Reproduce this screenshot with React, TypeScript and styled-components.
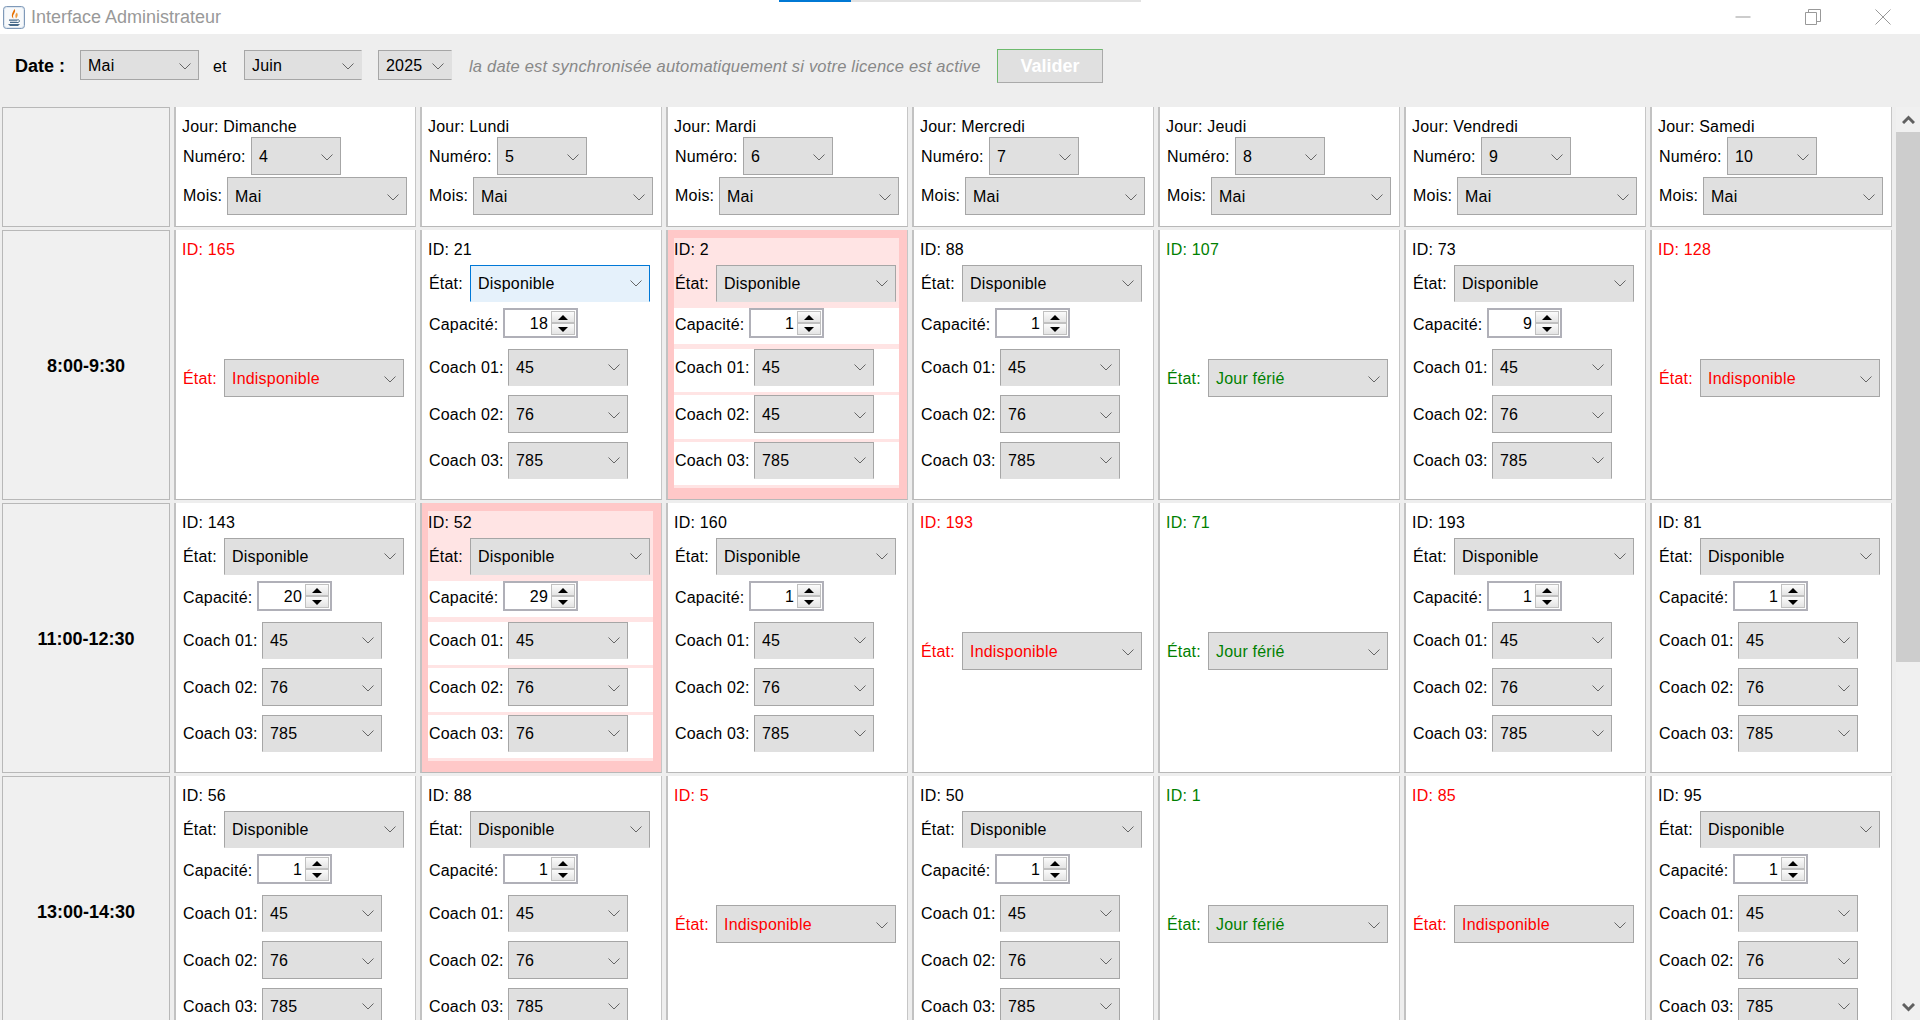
import * as React from 'react';
import styled, { createGlobalStyle } from 'styled-components';

const GlobalStyle = createGlobalStyle`
  html, body {
    margin: 0;
    padding: 0;
    height: 1020px;
    overflow: hidden;
    background: #eeeeee;
    font-family: 'Liberation Sans', Arial, sans-serif;
    font-size: 16px;
    letter-spacing: 0.2px;
    color: #000;
  }
`;

const Window = styled.div`
  display: flex;
  flex-direction: column;
  width: 1920px;
  height: 1020px;
  overflow: hidden;
`;

const TitleBar = styled.div`
  position: relative;
  display: flex;
  align-items: center;
  flex: none;
  height: 34px;
  padding-left: 3px;
  background: #fff;
  color: #999;
  font-size: 18px;
  letter-spacing: 0;
`;

const TitleText = styled.span`
  margin-left: 6px;
`;

const LoadTrack = styled.div`
  position: absolute;
  top: 0;
  left: 779px;
  width: 362px;
  height: 2px;
  background: #e2e2e2;
`;

const LoadBar = styled.div`
  width: 72px;
  height: 100%;
  background: #0078d4;
`;

const WindowButtons = styled.div`
  display: flex;
  align-items: center;
  gap: 54px;
  margin-left: auto;
  padding-right: 29px;
`;

const Toolbar = styled.div`
  display: flex;
  align-items: center;
  flex: none;
  height: 73px;
  padding: 0 0 11px 15px;
  box-sizing: border-box;
  background: #eeeeee;
`;

const DateLabel = styled.span`
  width: 65px;
  padding-top: 2px;
  font-weight: 700;
  font-size: 18px;
  letter-spacing: 0;
`;

const AndLabel = styled.span`
  width: 45px;
  padding: 3px 0 0 14px;
  box-sizing: border-box;
`;

const YearSlot = styled.div`
  margin-left: 16px;
`;

const Hint = styled.span`
  margin: 0 19px 0 17px;
  padding-top: 2px;
  width: 509px;
  flex: none;
  color: #888;
  font-size: 16.5px;
  font-style: italic;
  white-space: nowrap;
`;

const ValidateButton = styled.button`
  width: 106px;
  height: 34px;
  margin-top: 2px;
  padding: 0;
  border: 1px solid #aaaaaa;
  border-top-color: #6dba6d;
  border-left-color: #6dba6d;
  background: #e0e0e0;
  color: #fff;
  font: 700 18px 'Liberation Sans', Arial, sans-serif;
`;

const Body = styled.div`
  display: flex;
  flex: 1;
  min-height: 0;
`;

const Board = styled.div`
  display: grid;
  flex: none;
  grid-template-columns: 168px repeat(7, 242px);
  grid-template-rows: 120px repeat(3, 270px);
  column-gap: 4px;
  row-gap: 3px;
  width: 1893px;
  padding-left: 2px;
  box-sizing: border-box;
  overflow: hidden;
`;

const TimeCell = styled.div`
  display: flex;
  align-items: center;
  justify-content: center;
  padding-top: 2px;
  border: 1px solid #b8b8b8;
  background: #f0f0f0;
  font-weight: 700;
  font-size: 18px;
  letter-spacing: 0;
  box-sizing: border-box;
`;

const Cell = styled.div<{ $flag?: boolean }>`
  min-width: 0;
  padding: 8px 8px 0 6px;
  box-sizing: border-box;
  border-left: 2px solid #c2c2c2;
  border-right: 1px solid #c6c6c6;
  border-bottom: 1px solid #b8b8b8;
  background: ${props => (props.$flag ? '#ffc8c8' : '#fff')};
`;

const Stack = styled.div<{ $flag?: boolean }>`
  display: flex;
  flex-direction: column;
  gap: 3px;
  height: 250px;
  background: ${props => (props.$flag ? '#ffe4e4' : 'transparent')};
`;

const Top = styled.div`
  height: 70px;
`;

const Band = styled.div<{ $flag?: boolean; $h: number }>`
  display: flex;
  align-items: flex-start;
  height: ${props => props.$h}px;
  padding-left: 1px;
  background: ${props => (props.$flag ? '#fff' : 'transparent')};
`;

const CapacityBand = styled(Band)`
  margin-bottom: 2px;
`;

const FieldRow = styled.div<{ $top?: number }>`
  display: flex;
  align-items: center;
  padding-left: 1px;
  margin-top: ${props => props.$top || 0}px;
`;

const TextLine = styled.div<{ $color?: string }>`
  height: 22px;
  line-height: 24px;
  color: ${props => props.$color || '#000'};
  white-space: nowrap;
`;

const Label = styled.span<{ $w: number; $color?: string; $h?: number }>`
  flex: none;
  width: ${props => props.$w}px;
  color: ${props => props.$color || '#000'};
  white-space: nowrap;
  line-height: ${props => props.$h || 37}px;
`;

const ComboBox = styled.div<{
  $w: number;
  $h?: number;
  $color?: string;
  $focus?: boolean;
  $noBottom?: boolean;
  $noRight?: boolean;
}>`
  display: flex;
  align-items: center;
  flex: none;
  justify-content: space-between;
  width: ${props => props.$w}px;
  height: ${props => props.$h || 37}px;
  padding: ${props => (props.$h ? '2px' : '0')} 7px 0 7px;
  box-sizing: border-box;
  border: 1px solid ${props => (props.$focus ? '#0078d7' : '#a6a6a6')};
  border-bottom-color: ${props => (props.$noBottom ? 'transparent' : props.$focus ? '#0078d7' : '#a6a6a6')};
  border-right-color: ${props => (props.$noRight ? 'transparent' : props.$focus ? '#0078d7' : '#a6a6a6')};
  background: ${props => (props.$focus ? '#e5f1fb' : '#e0e0e0')};
  color: ${props => props.$color || '#000'};
  white-space: nowrap;
`;

const Spinner = styled.div`
  display: flex;
  flex: none;
  width: 75px;
  height: 30px;
  padding: 1px;
  box-sizing: border-box;
  border: 2px solid #b0b0b8;
  background: #fff;
`;

const SpinnerValue = styled.span`
  flex: 1;
  padding-right: 3px;
  text-align: right;
  line-height: 25px;
`;

const SpinnerButtons = styled.div`
  display: flex;
  flex-direction: column;
  flex: none;
  width: 24px;
`;

const SpinnerButton = styled.div`
  display: flex;
  align-items: center;
  justify-content: center;
  flex: 1;
  border: 1px solid #c0c0c0;
  background: linear-gradient(#fbfbfb, #e4e4e4);
`;

const ScrollBar = styled.div`
  display: flex;
  flex-direction: column;
  flex: none;
  width: 24px;
  margin-left: 3px;
  background: #f0f0f0;
`;

const ScrollArrow = styled.div`
  display: flex;
  align-items: center;
  justify-content: center;
  flex: none;
  height: 25px;
`;

const ScrollThumb = styled.div`
  flex: none;
  height: 530px;
  background: #cdcdcd;
`;

const ScrollRest = styled.div`
  flex: 1;
`;

const Chevron = () => (
  <svg width="12" height="7" viewBox="0 0 12 7" fill="none">
    <path d="M0.5 0.5 L6 6 L11.5 0.5" stroke="#666" strokeWidth="1" />
  </svg>
);

const ScrollChevron = ({ up }: { up?: boolean }) => (
  <svg width="13" height="9" viewBox="0 0 13 9" fill="none">
    <path d={up ? 'M1 8 L6.5 2.5 L12 8' : 'M1 1 L6.5 6.5 L12 1'} stroke="#606060" strokeWidth="3" />
  </svg>
);

const Triangle = ({ up }: { up?: boolean }) => (
  <svg width="10" height="5" viewBox="0 0 10 5">
    <path d={up ? 'M0 5 L5 0 L10 5 Z' : 'M0 0 L10 0 L5 5 Z'} fill="#000" />
  </svg>
);

const JavaIcon = () => (
  <svg width="22" height="23" viewBox="0 0 22 23" fill="none">
    <rect x="0.5" y="0.5" width="21" height="22" rx="3" fill="#dfe7f0" stroke="#7f99b8" />
    <rect x="2" y="2" width="18" height="19" rx="2" fill="#f7f9fb" />
    <path d="M11.5 3 C14 6.5 8.5 8 10.5 12.5 C7.5 10.5 9 7 11.5 3 Z" fill="#e76f00" />
    <path d="M14 6.5 C12 8 12 10.5 13 12.5 C15 10.5 15 8.5 14 6.5 Z" fill="#ef9a3c" />
    <path d="M6 13.5 H14.5 V14.7 H6 Z M7 15.8 H14 V17 H7 Z M5 18 H17 L15 20 H7 Z" fill="#46698a" />
    <path d="M14.5 13.7 C17.5 13.7 17 16.6 14 16.6" stroke="#46698a" strokeWidth="1" />
  </svg>
);

const Minimize = () => (
  <svg width="16" height="16" viewBox="0 0 16 16" fill="none">
    <path d="M0.5 8 H15.5" stroke="#999" />
  </svg>
);

const Restore = () => (
  <svg width="16" height="16" viewBox="0 0 16 16" fill="none">
    <path d="M0.5 3.5 H11.5 V15.5 H0.5 Z M3.5 3.5 V0.5 H15.5 V12.5 H11.5" stroke="#999" />
  </svg>
);

const Close = () => (
  <svg width="16" height="16" viewBox="0 0 16 16" fill="none">
    <path d="M0.5 0.5 L15.5 15.5 M15.5 0.5 L0.5 15.5" stroke="#999" />
  </svg>
);

const RED = '#ff0000';
const GREEN = '#008000';

interface Slot {
  id: number;
  off?: 'Indisponible' | 'Jour férié';
  cap?: number;
  coach?: string[];
  flag?: boolean;
  focus?: boolean;
}

const open = (id: number, cap = 1, coach = ['45', '76', '785']): Slot => ({ id, cap, coach });

const ROWS: { time: string; slots: Slot[] }[] = [
  {
    time: '8:00-9:30',
    slots: [
      { id: 165, off: 'Indisponible' },
      { ...open(21, 18), focus: true },
      { ...open(2, 1, ['45', '45', '785']), flag: true },
      open(88),
      { id: 107, off: 'Jour férié' },
      open(73, 9),
      { id: 128, off: 'Indisponible' },
    ],
  },
  {
    time: '11:00-12:30',
    slots: [
      open(143, 20),
      { ...open(52, 29, ['45', '76', '76']), flag: true },
      open(160),
      { id: 193, off: 'Indisponible' },
      { id: 71, off: 'Jour férié' },
      open(193),
      open(81),
    ],
  },
  {
    time: '13:00-14:30',
    slots: [
      open(56),
      open(88),
      { id: 5, off: 'Indisponible' },
      open(50),
      { id: 1, off: 'Jour férié' },
      { id: 85, off: 'Indisponible' },
      open(95),
    ],
  },
];

const DAYS = [
  ['Dimanche', '4'],
  ['Lundi', '5'],
  ['Mardi', '6'],
  ['Mercredi', '7'],
  ['Jeudi', '8'],
  ['Vendredi', '9'],
  ['Samedi', '10'],
];

const Combo = (props: {
  value: string;
  w: number;
  h?: number;
  color?: string;
  focus?: boolean;
  noBottom?: boolean;
  noRight?: boolean;
}) => (
  <ComboBox
    $w={props.w}
    $h={props.h}
    $color={props.color}
    $focus={props.focus}
    $noBottom={props.noBottom}
    $noRight={props.noRight}
  >
    <span>{props.value}</span>
    <Chevron />
  </ComboBox>
);

const SlotCell = ({ slot }: { slot: Slot }) => {
  if (slot.off) {
    const color = slot.off === 'Jour férié' ? GREEN : RED;
    return (
      <Cell>
        <TextLine $color={color}>ID: {slot.id}</TextLine>
        <FieldRow $top={99}>
          <Label $w={41} $color={color}>État:</Label>
          <Combo value={slot.off} w={180} h={38} color={color} />
        </FieldRow>
      </Cell>
    );
  }
  const coach = slot.coach || [];
  return (
    <Cell $flag={slot.flag}>
      <Stack $flag={slot.flag}>
        <div>
          <Top>
            <TextLine>ID: {slot.id}</TextLine>
            <FieldRow $top={5}>
              <Label $w={41}>État:</Label>
              <Combo value="Disponible" w={180} focus={slot.focus} noBottom />
            </FieldRow>
          </Top>
          <CapacityBand $flag={slot.flag} $h={36}>
            <Label $w={74} $h={33}>Capacité:</Label>
            <Spinner>
              <SpinnerValue>{slot.cap}</SpinnerValue>
              <SpinnerButtons>
                <SpinnerButton><Triangle up /></SpinnerButton>
                <SpinnerButton><Triangle /></SpinnerButton>
              </SpinnerButtons>
            </Spinner>
          </CapacityBand>
        </div>
        {coach.map((value, i) => (
          <Band key={i} $flag={slot.flag} $h={i === 1 ? 44 : 43}>
            <Label $w={79} $h={i === 1 ? 39 : 37}>Coach 0{i + 1}:</Label>
            {i === 1 ? (
              <Combo value={value} w={120} h={38} />
            ) : (
              <Combo value={value} w={120} noBottom />
            )}
          </Band>
        ))}
      </Stack>
    </Cell>
  );
};

export default function App() {
  return (
    <Window>
      <GlobalStyle />
      <TitleBar>
        <JavaIcon />
        <TitleText>Interface Administrateur</TitleText>
        <LoadTrack><LoadBar /></LoadTrack>
        <WindowButtons>
          <Minimize />
          <Restore />
          <Close />
        </WindowButtons>
      </TitleBar>
      <Toolbar>
        <DateLabel>Date :</DateLabel>
        <Combo value="Mai" w={119} h={30} />
        <AndLabel>et</AndLabel>
        <Combo value="Juin" w={118} h={30} noRight />
        <YearSlot>
          <Combo value="2025" w={74} h={30} noRight />
        </YearSlot>
        <Hint>la date est synchronisée automatiquement si votre licence est active</Hint>
        <ValidateButton>Valider</ValidateButton>
      </Toolbar>
      <Body>
        <Board>
          <TimeCell />
          {DAYS.map(([day, num]) => (
            <Cell key={day}>
              <TextLine>Jour: {day}</TextLine>
              <FieldRow>
                <Label $w={68}>Numéro:</Label>
                <Combo value={num} w={90} h={38} />
              </FieldRow>
              <FieldRow $top={1}>
                <Label $w={44} $h={40}>Mois:</Label>
                <Combo value="Mai" w={180} h={38} />
              </FieldRow>
            </Cell>
          ))}
          {ROWS.map(row => (
            <React.Fragment key={row.time}>
              <TimeCell>{row.time}</TimeCell>
              {row.slots.map((slot, i) => (
                <SlotCell key={i} slot={slot} />
              ))}
            </React.Fragment>
          ))}
        </Board>
        <ScrollBar>
          <ScrollArrow><ScrollChevron up /></ScrollArrow>
          <ScrollThumb />
          <ScrollRest />
          <ScrollArrow><ScrollChevron /></ScrollArrow>
        </ScrollBar>
      </Body>
    </Window>
  );
}
